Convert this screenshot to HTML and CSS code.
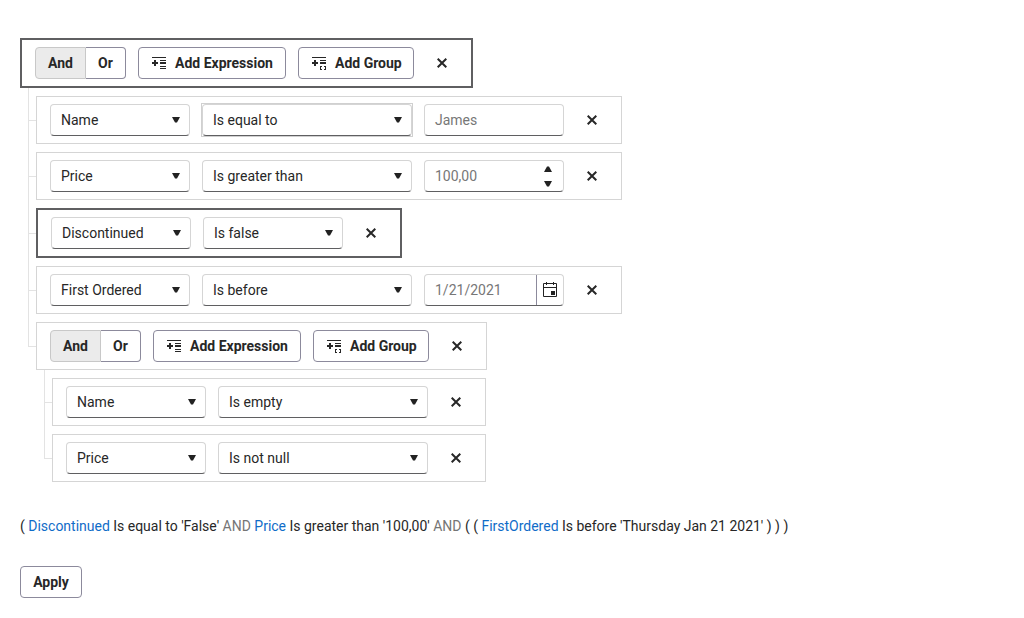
FILE: index.html
```html
<!DOCTYPE html>
<html lang="en">
<head>
<meta charset="utf-8">
<title>Filter builder</title>
<link rel="stylesheet" href="styles.css">
</head>
<body>
<svg class="sprite" aria-hidden="true">
  <symbol id="caret" viewBox="0 0 8 6"><path d="M0 0h8L5 5.6H3z"/></symbol>
  <symbol id="close" viewBox="0 0 10 10"><path d="M.7.7l8.6 8.6M9.3.7L.7 9.3" fill="none" stroke="currentColor" stroke-width="2"/></symbol>
  <symbol id="add-exp" viewBox="0 0 14 12"><path d="M0 0h14v1H0zM8 3h6v1H8zM8 5h6v2H8zM8 9h6v1H8zM8 11h6v1H8zM0 5h6v2H0zM2 3h2v6H2z"/></symbol>
  <symbol id="add-group" viewBox="0 0 14 13"><path d="M0 0h14v1H0zM8 3h6v1H8zM8 5h6v2H8zM0 5h6v2H0zM2 3h2v6H2zM8 9h2v1H9v2h1v1H8zM12 9h2v4h-2v-1h1v-2h-1z"/></symbol>
  <symbol id="calendar" viewBox="0 0 14 16"><path d="M3 0h1v3H3zM10 0h1v3h-1zM0 5h14v1H0zM8 9h4v4H8z"/><path d="M.5 1.5h13v13H.5z" fill="none" stroke="currentColor"/></symbol>
</svg>
<main class="filter">
  <div class="box selected">
    <div class="toggle"><button class="on">And</button><button>Or</button></div>
    <button class="btn add-expression"><svg class="icon"><use href="#add-exp"/></svg>Add Expression</button>
    <button class="btn add-group"><svg class="icon tall"><use href="#add-group"/></svg>Add Group</button>
    <button class="close"><svg><use href="#close"/></svg></button>
  </div>
  <div class="children">
    <div class="node"><span class="rail"></span><div class="box">
      <div class="field">Name<svg class="caret"><use href="#caret"/></svg></div>
      <div class="field wide focused">Is equal to<svg class="caret"><use href="#caret"/></svg></div>
      <div class="field value">James</div>
      <button class="close"><svg><use href="#close"/></svg></button>
    </div></div>
    <div class="node"><span class="rail"></span><div class="box">
      <div class="field">Price<svg class="caret"><use href="#caret"/></svg></div>
      <div class="field wide">Is greater than<svg class="caret"><use href="#caret"/></svg></div>
      <div class="field value">100,00<span class="spinner"><svg class="caret up"><use href="#caret"/></svg><svg class="caret"><use href="#caret"/></svg></span></div>
      <button class="close"><svg><use href="#close"/></svg></button>
    </div></div>
    <div class="node offset"><span class="rail"></span><div class="box selected">
      <div class="field">Discontinued<svg class="caret"><use href="#caret"/></svg></div>
      <div class="field">Is false<svg class="caret"><use href="#caret"/></svg></div>
      <button class="close"><svg><use href="#close"/></svg></button>
    </div></div>
    <div class="node"><span class="rail"></span><div class="box">
      <div class="field">First Ordered<svg class="caret"><use href="#caret"/></svg></div>
      <div class="field wide">Is before<svg class="caret"><use href="#caret"/></svg></div>
      <div class="field value date">1/21/2021<span class="picker"><svg><use href="#calendar"/></svg></span></div>
      <button class="close"><svg><use href="#close"/></svg></button>
    </div></div>
    <div class="node last"><span class="rail"></span><div class="group">
      <div class="box">
        <div class="toggle"><button class="on">And</button><button>Or</button></div>
        <button class="btn add-expression"><svg class="icon"><use href="#add-exp"/></svg>Add Expression</button>
        <button class="btn add-group"><svg class="icon tall"><use href="#add-group"/></svg>Add Group</button>
        <button class="close"><svg><use href="#close"/></svg></button>
      </div>
      <div class="children">
        <div class="node"><span class="rail"></span><div class="box">
          <div class="field">Name<svg class="caret"><use href="#caret"/></svg></div>
          <div class="field wide">Is empty<svg class="caret"><use href="#caret"/></svg></div>
          <button class="close"><svg><use href="#close"/></svg></button>
        </div></div>
        <div class="node last"><span class="rail"></span><div class="box">
          <div class="field">Price<svg class="caret"><use href="#caret"/></svg></div>
          <div class="field wide">Is not null<svg class="caret"><use href="#caret"/></svg></div>
          <button class="close"><svg><use href="#close"/></svg></button>
        </div></div>
      </div>
    </div></div>
  </div>
  <p class="summary">( <span class="name">Discontinued</span> Is equal to 'False' <span class="op">AND</span> <span class="name">Price</span> Is greater than '100,00' <span class="op">AND</span> ( ( <span class="name">FirstOrdered</span> Is before 'Thursday Jan 21 2021' ) ) )</p>
  <button class="btn apply">Apply</button>
</main>
</body>
</html>
```
FILE: styles.css
```css
* { box-sizing: border-box; }
body {
  margin: 0;
  background: #fff;
  color: #272727;
  font: 14px/20px Roboto, sans-serif;
}
button {
  font: inherit;
  color: inherit;
  padding: 0;
  border: 0;
  background: none;
}
svg { fill: currentColor; display: block; }
.sprite { display: none; }
.filter {
  display: flex;
  flex-direction: column;
  align-items: flex-start;
  padding: 38px 20px 0;
}
.box {
  display: flex;
  gap: 12px;
  width: max-content;
  padding: 7px 13px;
  border: 1px solid #d5d5d5;
}
.box.selected { border: 2px solid #5f5f61; }
.children { padding-left: 8px; }
.node { display: flex; }
.node > .box, .node > .group { margin-top: 8px; }
.rail {
  --tick: 32px;
  width: 8px;
  background:
    linear-gradient(#e3e3e3, #e3e3e3) 0 0 / 1px 100% no-repeat,
    linear-gradient(#e3e3e3, #e3e3e3) 0 var(--tick) / 8px 1px no-repeat;
}
.offset > .rail { --tick: 33px; }
.last > .rail { height: 33px; }
.field {
  display: flex;
  align-items: center;
  justify-content: space-between;
  width: 140px;
  height: 32px;
  padding: 0 9px 0 10px;
  border: 1px solid #d5d5d5;
  border-bottom-color: #5f5f61;
  border-radius: 4px;
}
.field.wide { width: 210px; }
.focused { position: relative; }
/* Square focus ring around the rounded field */
.focused::after {
  content: "";
  position: absolute;
  inset: -2px;
  border: 1px solid #d0d0d0;
}
.value { color: #777; }
.caret { width: 8px; height: 6px; color: #222; }
.up { transform: rotate(180deg); }
.spinner { display: grid; gap: 9px; padding: 1px 2px 0 0; }
.date { padding-right: 0; }
.picker {
  display: grid;
  place-items: center;
  width: 27px;
  height: 30px;
  border-left: 1px solid #8c8a9c;
  color: #222;
}
.picker svg { width: 14px; height: 16px; }
.close {
  display: grid;
  place-items: center;
  width: 32px;
  height: 32px;
}
.close svg { width: 10px; height: 10px; }
.toggle { display: flex; font-weight: 700; }
.toggle button {
  width: 40px;
  height: 32px;
  border: 1px solid #8c8a9c;
  border-left: 0;
  border-radius: 0 4px 4px 0;
}
.toggle .on {
  width: 51px;
  border: 1px solid #c8c8c8;
  border-radius: 4px 0 0 4px;
  background: #ebebeb;
}
.btn {
  display: flex;
  align-items: center;
  justify-content: center;
  gap: 9px;
  height: 32px;
  border: 1px solid #8c8a9c;
  border-radius: 4px;
  font-weight: 700;
}
.add-expression, .add-group { justify-content: flex-start; padding-left: 13px; }
.add-expression { width: 148px; }
.add-group { width: 116px; }
.icon { width: 14px; height: 12px; }
.icon.tall { height: 13px; }
.summary { margin: 34px 0 30px; letter-spacing: -0.007px; }
.name { color: #106cc8; }
.op { color: #757575; }
.apply { width: 62px; }
```
